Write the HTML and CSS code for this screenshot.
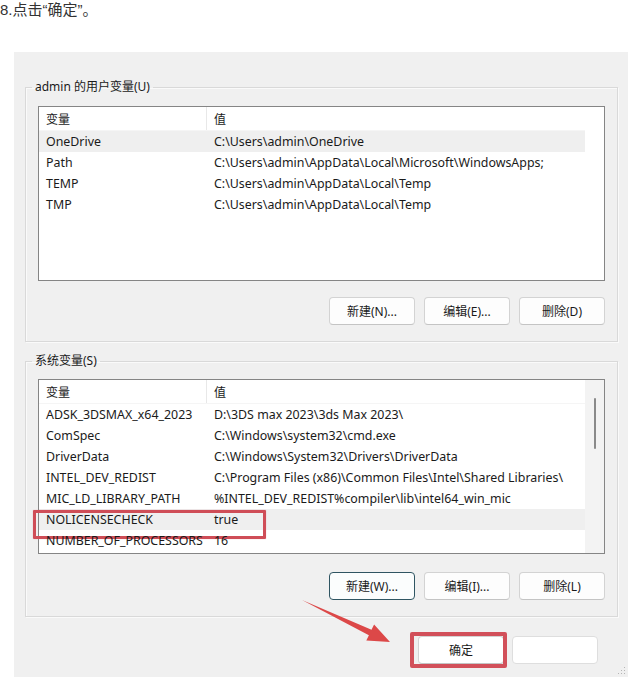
FILE: index.html
```html
<!DOCTYPE html>
<html lang="zh-CN">
<head>
<meta charset="utf-8">
<title>确定</title>
<link rel="stylesheet" href="styles.css">
</head>
<body>
<div class="page">
  <p class="title">8.点击“确定”。</p>
  <div class="dialog">
    <fieldset class="group group-user">
      <legend>admin 的用户变量(U)</legend>
      <div class="listbox">
        <div class="list">
          <div class="row head"><span class="c1">变量</span><span class="c2">值</span></div>
          <div class="row sel"><span class="c1">OneDrive</span><span class="c2">C:\Users\admin\OneDrive</span></div>
          <div class="row"><span class="c1">Path</span><span class="c2">C:\Users\admin\AppData\Local\Microsoft\WindowsApps;</span></div>
          <div class="row"><span class="c1">TEMP</span><span class="c2">C:\Users\admin\AppData\Local\Temp</span></div>
          <div class="row"><span class="c1">TMP</span><span class="c2">C:\Users\admin\AppData\Local\Temp</span></div>
        </div>
        <div class="side"></div>
      </div>
      <div class="btns">
        <button class="btn">新建(N)...</button>
        <button class="btn">编辑(E)...</button>
        <button class="btn">删除(D)</button>
      </div>
    </fieldset>
    <fieldset class="group group-sys">
      <legend>系统变量(S)</legend>
      <div class="listbox">
        <div class="list">
          <div class="row head"><span class="c1">变量</span><span class="c2">值</span></div>
          <div class="row"><span class="c1">ADSK_3DSMAX_x64_2023</span><span class="c2">D:\3DS max 2023\3ds Max 2023\</span></div>
          <div class="row"><span class="c1">ComSpec</span><span class="c2">C:\Windows\system32\cmd.exe</span></div>
          <div class="row"><span class="c1">DriverData</span><span class="c2">C:\Windows\System32\Drivers\DriverData</span></div>
          <div class="row"><span class="c1">INTEL_DEV_REDIST</span><span class="c2">C:\Program Files (x86)\Common Files\Intel\Shared Libraries\</span></div>
          <div class="row"><span class="c1">MIC_LD_LIBRARY_PATH</span><span class="c2">%INTEL_DEV_REDIST%compiler\lib\intel64_win_mic</span></div>
          <div class="row sel marked"><span class="c1">NOLICENSECHECK</span><span class="c2">true</span></div>
          <div class="row"><span class="c1">NUMBER_OF_PROCESSORS</span><span class="c2">16</span></div>
        </div>
        <div class="side scroll"><div class="thumb"></div></div>
      </div>
      <div class="btns">
        <button class="btn focus">新建(W)...</button>
        <button class="btn">编辑(I)...</button>
        <button class="btn">删除(L)</button>
      </div>
    </fieldset>
    <div class="okrow">
      <button class="btn ok">确定</button>
      <button class="btn cancel"></button>
    </div>
    <svg class="grip" width="8" height="8" viewBox="0 0 8 8"><g fill="#b5b5b5"><rect x="6" y="0" width="1" height="1"/><rect x="3" y="3" width="1" height="1"/><rect x="6" y="3" width="1" height="1"/><rect x="0" y="6" width="1" height="1"/><rect x="3" y="6" width="1" height="1"/><rect x="6" y="6" width="1" height="1"/></g></svg>
  </div>
  <svg class="arrow" width="630" height="685" viewBox="0 0 630 685">
    <polygon points="302,600 371.5,629.8 374.1,624.4 390,642 366.3,640.6 368.9,635.2" fill="#dc4848"/>
  </svg>
</div>
</body>
</html>
```

FILE: styles.css
```css
* { box-sizing: border-box; }
html, body { margin: 0; padding: 0; background: #fff; }
body {
  font-family: "Noto Sans", "Noto Sans CJK SC", sans-serif;
  font-size: 12px;
  color: #1a1a1a;
}
.page { position: relative; width: 630px; height: 685px; overflow: hidden; }
.title {
  margin: 0;
  height: 52px;
  padding-top: 0;
  font-family: "Liberation Sans", "Noto Sans CJK SC", sans-serif;
  font-size: 15px;
  line-height: 20px;
  color: #333;
}
.dialog {
  position: relative;
  margin-left: 14px;
  width: 614px;
  height: 625px;
  background: #f0f0f0;
  padding: 27px 10px 0 11px;
}
.group {
  margin: 0;
  width: 593px;
  border: 1px solid #d9d9d9;
  box-shadow: inset 1px 1px 0 #fafafa, 1px 1px 0 #fafafa;
  padding: 11px 12px 16px 12px;
  min-width: 0;
}
.group legend {
  font-family: "Noto Sans", "Noto Sans CJK SC", sans-serif;
  font-size: 12px;
  line-height: 16px;
  height: 16px;
  padding: 0 3px;
  margin-left: -6px;
  color: #1a1a1a;
}
.group-sys { margin-top: 11px; padding-top: 10px; }
.listbox {
  display: flex;
  height: 175px;
  border: 1px solid #858585;
  background: #fff;
}
.list { flex: 1; min-width: 0; }
.side { width: 19px; background: #fff; }
.side.scroll { background: #f3f3f3; padding-top: 18px; display: flex; justify-content: center; }
.thumb { width: 2px; height: 51px; background: #8a8a8a; border-radius: 1px; }
.row {
  display: flex;
  height: 21px;
  line-height: 22px;
  font-size: 12.4px;
  white-space: nowrap;
  position: relative;
}
.row.head { height: 24px; line-height: 24px; font-size: 12px; border-bottom: 1px solid #f5f5f5; }
.row.head .c1 { border-right: 1px solid #e8e8e8; }
.row.head span { font-family: "Noto Sans CJK SC", sans-serif; }
.row.sel { background: #efefef; }
.c1 { width: 168px; padding-left: 7px; flex: none; }
.c2 { padding-left: 7px; }
.row.marked::after {
  content: "";
  position: absolute;
  left: -6px;
  top: 1px;
  width: 227px;
  height: 23px;
  border: 3px solid #cf4d57;
  border-radius: 1px;
  box-shadow: 0 0 1px rgba(207,77,87,0.6);
}
.btns {
  display: flex;
  justify-content: flex-end;
  gap: 9px;
  margin-top: 16px;
}
.group-sys .btns { margin-top: 18px; }
.btn {
  width: 86px;
  height: 28px;
  padding: 0;
  font-family: "Noto Sans", "Noto Sans CJK SC", sans-serif;
  font-size: 12px;
  color: #1a1a1a;
  background: #fdfdfd;
  border: 1px solid #d3d3d3;
  border-bottom-color: #c4c4c4;
  border-radius: 4px;
}
.btn.focus { border: 1px solid #2f5562; background: #fbfdfd; }
.okrow {
  display: flex;
  justify-content: flex-end;
  gap: 8px;
  margin-top: 19px;
  padding-right: 20px;
}
.btn.ok { position: relative; background: #fff; }
.btn.ok::after {
  content: "";
  position: absolute;
  left: -9px;
  top: -5px;
  right: -4px;
  bottom: -5px;
  border: 4px solid #d2505a;
  border-radius: 2px;
}
.btn.cancel { background: #fff; border-color: #dedede; }
.grip { position: absolute; right: 2px; bottom: 2px; }
.arrow { position: absolute; left: 0; top: 0; pointer-events: none; }
```
